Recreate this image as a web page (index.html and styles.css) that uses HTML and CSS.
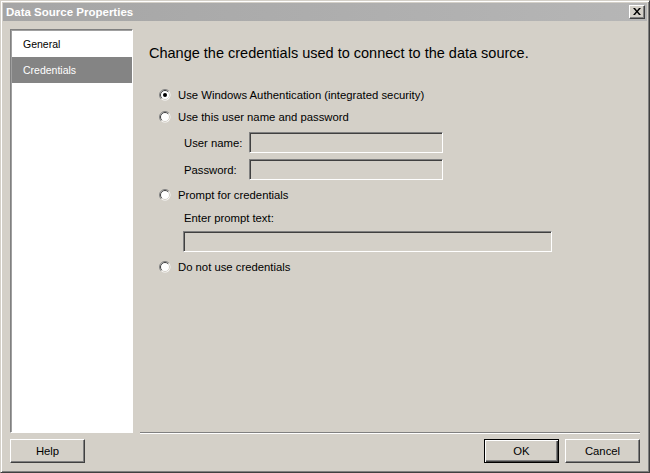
FILE: index.html
```html
<!DOCTYPE html>
<html>
<head>
<meta charset="utf-8">
<title>Data Source Properties</title>
<link rel="stylesheet" href="styles.css">
</head>
<body>
<div class="window">
  <div class="titlebar">
    <span class="title">Data Source Properties</span>
    <span class="close-btn">
      <svg width="8" height="7" viewBox="0 0 8 7"><path d="M0 0h2l2 2.5L6 0h2L5 3.5 8 7H6L4 4.5 2 7H0l3-3.5z" fill="#000"/></svg>
    </span>
  </div>
  <div class="main">
    <div class="sidebar">
      <div class="nav-item">General</div>
      <div class="nav-item selected">Credentials</div>
    </div>
    <div class="content">
      <div class="heading">Change the credentials used to connect to the data source.</div>
      <div class="options">
        <div class="radio-row">
          <svg class="radio" width="12" height="12" viewBox="0 0 12 12"><circle cx="6" cy="6" r="5.5" fill="#fff"/><path d="M2.1 9.9A5.5 5.5 0 0 1 9.9 2.1" stroke="#808080" fill="none"/><path d="M2.8 9.2A4.5 4.5 0 0 1 9.2 2.8" stroke="#404040" fill="none"/><path d="M9.2 2.8A4.5 4.5 0 0 1 2.8 9.2" stroke="#d4d0c8" fill="none"/><circle cx="6" cy="6" r="2" fill="#000"/></svg>
          <span>Use Windows Authentication (integrated security)</span>
        </div>
        <div class="radio-row">
          <svg class="radio" width="12" height="12" viewBox="0 0 12 12"><circle cx="6" cy="6" r="5.5" fill="#fff"/><path d="M2.1 9.9A5.5 5.5 0 0 1 9.9 2.1" stroke="#808080" fill="none"/><path d="M2.8 9.2A4.5 4.5 0 0 1 9.2 2.8" stroke="#404040" fill="none"/><path d="M9.2 2.8A4.5 4.5 0 0 1 2.8 9.2" stroke="#d4d0c8" fill="none"/></svg>
          <span>Use this user name and password</span>
        </div>
        <div class="fields">
          <div class="field-row">
            <span class="field-label">User name:</span>
            <span class="textbox short"></span>
          </div>
          <div class="field-row">
            <span class="field-label">Password:</span>
            <span class="textbox short"></span>
          </div>
        </div>
        <div class="radio-row gap-top">
          <svg class="radio" width="12" height="12" viewBox="0 0 12 12"><circle cx="6" cy="6" r="5.5" fill="#fff"/><path d="M2.1 9.9A5.5 5.5 0 0 1 9.9 2.1" stroke="#808080" fill="none"/><path d="M2.8 9.2A4.5 4.5 0 0 1 9.2 2.8" stroke="#404040" fill="none"/><path d="M9.2 2.8A4.5 4.5 0 0 1 2.8 9.2" stroke="#d4d0c8" fill="none"/></svg>
          <span>Prompt for credentials</span>
        </div>
        <div class="prompt">
          <div class="prompt-label">Enter prompt text:</div>
          <span class="textbox wide"></span>
        </div>
        <div class="radio-row gap-top">
          <svg class="radio" width="12" height="12" viewBox="0 0 12 12"><circle cx="6" cy="6" r="5.5" fill="#fff"/><path d="M2.1 9.9A5.5 5.5 0 0 1 9.9 2.1" stroke="#808080" fill="none"/><path d="M2.8 9.2A4.5 4.5 0 0 1 9.2 2.8" stroke="#404040" fill="none"/><path d="M9.2 2.8A4.5 4.5 0 0 1 2.8 9.2" stroke="#d4d0c8" fill="none"/></svg>
          <span>Do not use credentials</span>
        </div>
      </div>
    </div>
  </div>
  <div class="footer">
    <button class="btn">Help</button>
    <div class="btn-group">
      <button class="btn btn-default">OK</button>
      <button class="btn">Cancel</button>
    </div>
  </div>
</div>
</body>
</html>
```

FILE: styles.css
```css
* { box-sizing: border-box; }
html, body { margin: 0; padding: 0; background: #d4d0c8; }
body { font-family: "Liberation Sans", Arial, sans-serif; color: #000; }

.window {
  width: 650px;
  height: 473px;
  background: #d4d0c8;
  border: 1px solid;
  border-color: #d4d0c8 #404040 #404040 #d4d0c8;
  box-shadow: inset 1px 1px 0 #fff, inset -1px -1px 0 #808080;
  padding: 2px;
  display: flex;
  flex-direction: column;
}

.titlebar {
  height: 18px;
  flex: none;
  background: linear-gradient(to right, #a5a5a5, #b6b6b6);
  display: flex;
  align-items: center;
  justify-content: space-between;
  padding: 0 2px 0 3px;
}
.title {
  color: #fff;
  font-weight: bold;
  font-size: 11.5px;
  line-height: 18px;
}
.close-btn {
  width: 16px;
  height: 14px;
  background: #d4d0c8;
  border: 1px solid;
  border-color: #fff #404040 #404040 #fff;
  box-shadow: inset -1px -1px 0 #808080;
  display: flex;
  align-items: center;
  justify-content: center;
  padding-bottom: 1px;
}

.main {
  flex: 1;
  display: flex;
  margin-top: 8px;
  padding: 0 7px;
  gap: 7px;
  min-height: 0;
}

.sidebar {
  width: 123px;
  flex: none;
  background: #fff;
  border: 1px solid;
  border-color: #808080 #fff #fff #808080;
  box-shadow: inset 1px 1px 0 #a0a0a0;
  padding: 1px 0 0 1px;
}
.nav-item {
  height: 26px;
  line-height: 26px;
  padding-left: 11px;
  font-size: 10.5px;
}
.nav-item.selected {
  background: #848484;
  color: #fff;
}

.content {
  flex: 1;
  border-bottom: 1px solid #808080;
  box-shadow: 0 1px 0 #fff;
  padding: 14px 0 0 9px;
}
.heading {
  font-size: 14.5px;
  line-height: 20px;
}

.options {
  margin-top: 21px;
  margin-left: 10px;
  font-size: 11.3px;
}
.radio-row {
  display: flex;
  align-items: center;
  gap: 7px;
  height: 22px;
}
.radio { flex: none; }
.gap-top { margin-top: 4px; }

.fields {
  margin-top: 4px;
  margin-left: 25px;
  display: flex;
  flex-direction: column;
  gap: 6px;
}
.field-row {
  display: flex;
  align-items: center;
}
.field-label {
  width: 65px;
  flex: none;
}

.textbox {
  display: block;
  height: 21px;
  background: #d4d0c8;
  border: 1px solid;
  border-color: #808080 #fff #fff #808080;
  box-shadow: inset 1px 1px 0 #404040;
}
.textbox.short { width: 194px; }
.textbox.wide { width: 369px; margin-left: -1px; }

.prompt {
  margin-top: 4px;
  margin-left: 25px;
}
.prompt-label {
  line-height: 16px;
  margin-bottom: 5px;
}

.footer {
  flex: none;
  display: flex;
  justify-content: space-between;
  padding: 6px 7px 7px 7px;
}
.btn-group {
  display: flex;
  gap: 6px;
}
.btn {
  width: 75px;
  height: 24px;
  background: #d4d0c8;
  border: 1px solid;
  border-color: #fff #404040 #404040 #fff;
  box-shadow: inset -1px -1px 0 #808080;
  font-family: "Liberation Sans", Arial, sans-serif;
  font-size: 11.3px;
  color: #000;
  padding: 0;
  margin: 0;
}
.btn-default {
  border-color: #000;
  box-shadow: inset 1px 1px 0 #fff, inset -1px -1px 0 #404040, inset -2px -2px 0 #808080;
}
```
